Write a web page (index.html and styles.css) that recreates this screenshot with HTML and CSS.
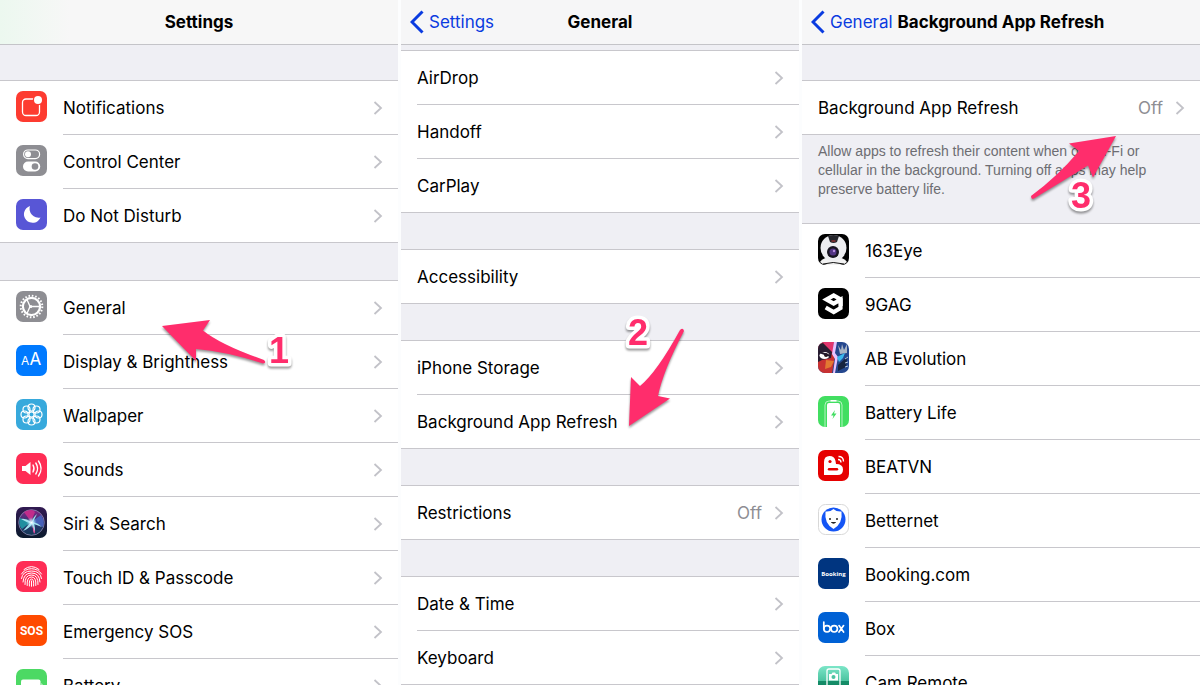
FILE: index.html
```
<!DOCTYPE html>
<html lang="en">
<head>
<meta charset="utf-8">
<meta name="viewport" content="width=device-width,initial-scale=1">
<title>Background App Refresh</title>
<link rel="stylesheet" href="styles.css">
</head>
<body>
<svg class="defs" aria-hidden="true">
  <symbol id="chevron" viewBox="0 0 10 16"><path d="M1.500 2 8 8l-6.500 6" fill="none" stroke="#c2c2c8" stroke-width="1.800"/></symbol>
  <symbol id="back" viewBox="0 0 14 24"><path d="M12.500 1.500 2 12l10.500 10.500" fill="none" stroke="#0a3be0" stroke-width="3"/></symbol>
</svg>

<main class="screens">

  <!-- Settings -->
  <section class="screen">
    <header class="nav nav-green"><h1>Settings</h1></header>

    <nav class="group">
      <a class="row" href="#">
        <svg class="icon" viewBox="0 0 31 31"><rect width="31" height="31" rx="7" fill="#fd3b30"/><rect x="6.500" y="8" width="17" height="16.500" rx="3.500" fill="none" stroke="#fff" stroke-width="1.300"/><circle cx="22" cy="9" r="5.200" fill="#fd3b30"/><circle cx="22" cy="9" r="4" fill="#fff"/></svg>
        <span class="label">Notifications<svg class="chev"><use href="#chevron"/></svg></span>
      </a>
      <a class="row" href="#">
        <svg class="icon" viewBox="0 0 31 31"><rect width="31" height="31" rx="7" fill="#8e8e93"/><rect x="7.600" y="5" width="16" height="8.600" rx="4.300" fill="none" stroke="#fff" stroke-width="1.200"/><circle cx="12" cy="9.300" r="3" fill="#fff"/><rect x="7" y="16.500" width="17.200" height="10" rx="5" fill="#fff"/><circle cx="19" cy="21.500" r="3.300" fill="#8e8e93"/></svg>
        <span class="label">Control Center<svg class="chev"><use href="#chevron"/></svg></span>
      </a>
      <a class="row" href="#">
        <svg class="icon" viewBox="0 0 31 31"><rect width="31" height="31" rx="7" fill="#5856d6"/><path d="M14 7A8.600 8.600 0 1 0 24.500 18.500 9 9 0 0 1 14 7z" fill="#fff"/></svg>
        <span class="label">Do Not Disturb<svg class="chev"><use href="#chevron"/></svg></span>
      </a>
    </nav>

    <nav class="group">
      <a class="row" href="#">
        <svg class="icon" viewBox="0 0 31 31"><rect width="31" height="31" rx="7" fill="#8e8e93"/><g fill="none" stroke="#fff"><circle cx="15.500" cy="15.500" r="10.800" stroke-width="2" stroke-dasharray="1.600 1.793"/><circle cx="15.500" cy="15.500" r="8.600" stroke-width="2.200"/><path d="M14 15.500 11 8.500M14 15.500l-3 7M15 15.500h8" stroke-width="1.300"/></g><circle cx="14.800" cy="15.500" r="1.500" fill="#fff"/></svg>
        <span class="label">General<svg class="chev"><use href="#chevron"/></svg></span>
      </a>
      <a class="row" href="#">
        <svg class="icon" viewBox="0 0 31 31"><rect width="31" height="31" rx="7" fill="#007aff"/><g fill="#fff" font-family="Inter, sans-serif"><text x="5" y="20" font-size="12">A</text><text x="13.500" y="20" font-size="17">A</text></g></svg>
        <span class="label">Display &amp; Brightness<svg class="chev"><use href="#chevron"/></svg></span>
      </a>
      <a class="row" href="#">
        <svg class="icon" viewBox="0 0 31 31"><rect width="31" height="31" rx="7" fill="#37a9dc"/><g fill="none" stroke="#fff" stroke-width="1.200"><circle cx="15.500" cy="15.500" r="2.600"/><circle cx="15.500" cy="8.500" r="3.500"/><circle cx="20.500" cy="10.500" r="3.500"/><circle cx="22.500" cy="15.500" r="3.500"/><circle cx="20.500" cy="20.500" r="3.500"/><circle cx="15.500" cy="22.500" r="3.500"/><circle cx="10.500" cy="20.500" r="3.500"/><circle cx="8.500" cy="15.500" r="3.500"/><circle cx="10.500" cy="10.500" r="3.500"/></g></svg>
        <span class="label">Wallpaper<svg class="chev"><use href="#chevron"/></svg></span>
      </a>
      <a class="row" href="#">
        <svg class="icon" viewBox="0 0 31 31"><rect width="31" height="31" rx="7" fill="#ff2d55"/><path d="M6 13h3.500l5-4v13l-5-4H6z" fill="#fff"/><path d="M17 12q2 3.500 0 7M19.800 10q3.600 5.500 0 11M22.500 8q5.200 7.500 0 15" fill="none" stroke="#fff" stroke-width="1.400" stroke-linecap="round"/></svg>
        <span class="label">Sounds<svg class="chev"><use href="#chevron"/></svg></span>
      </a>
      <a class="row" href="#">
        <svg class="icon" viewBox="0 0 31 31">
          <defs>
            <linearGradient id="siriBg" x2="0" y2="1"><stop stop-color="#321a52"/><stop offset="1" stop-color="#0b1a2d"/></linearGradient>
            <linearGradient id="siriA" x2="0" y2="1"><stop stop-color="#8a2488"/><stop offset=".5" stop-color="#2c3470"/><stop offset="1" stop-color="#123a55"/></linearGradient>
            <radialGradient id="siriGlow"><stop stop-color="#fff"/><stop offset=".5" stop-color="#b9e9ff" stop-opacity=".6"/><stop offset="1" stop-color="#6bc" stop-opacity="0"/></radialGradient>
          </defs>
          <rect width="31" height="31" rx="7" fill="url(#siriBg)"/>
          <circle cx="15.500" cy="15.500" r="12.800" fill="url(#siriA)" stroke="#8f8ab4" stroke-width=".8"/>
          <path d="M15 15 4 11q-2 7 2 11z" fill="#1f8f9f"/>
          <path d="M15 15 8 5q8-4 11 0z" fill="#c12c8b"/>
          <path d="M15 15l10-7q4 6 2 12z" fill="#4760b8"/>
          <path d="M15 15Q10 11 5 12q5 3 9 4L7 24q7-3 9-7l2 9q2-3 0-9l8 3q-4-4-9-5l4-8q-4 3-5 8z" fill="#a5e6ee"/>
          <path d="m16 17 2 10 1-2z" fill="#ff3c9c"/>
          <circle cx="15.500" cy="15.500" r="5.500" fill="url(#siriGlow)"/>
        </svg>
        <span class="label">Siri &amp; Search<svg class="chev"><use href="#chevron"/></svg></span>
      </a>
      <a class="row" href="#">
        <svg class="icon" viewBox="0 0 31 31"><rect width="31" height="31" rx="7" fill="#ff2d55"/><g fill="none" stroke="#fff" stroke-width="1" stroke-linecap="round"><path d="M8 8.500q7.500-6 15 0M5.500 13q3-5 10-5.300 7 .3 10 5.300M5.500 17.500q1-7.500 10-7.500t10 7.500"/><path d="M7 21q.5-9 8.500-9t8.500 9M9 23.500q-.5-9.500 6.500-9.500t6.500 9.500M11.200 24.500q-.7-8.500 4.300-8.500t4.300 8.500M13.400 25q-.6-7 2.100-7t2.100 7M15.500 20v5.300"/></g></svg>
        <span class="label">Touch ID &amp; Passcode<svg class="chev"><use href="#chevron"/></svg></span>
      </a>
      <a class="row" href="#">
        <svg class="icon" viewBox="0 0 31 31"><rect width="31" height="31" rx="7" fill="#ff4a00"/><text x="15.500" y="20" font-family="Roboto, sans-serif" font-weight="700" font-size="12" text-anchor="middle" fill="#fff">SOS</text></svg>
        <span class="label">Emergency SOS<svg class="chev"><use href="#chevron"/></svg></span>
      </a>
      <a class="row" href="#">
        <svg class="icon" viewBox="0 0 31 31"><rect width="31" height="31" rx="7" fill="#4cd964"/><rect x="5" y="10.500" width="19.500" height="11" rx="2" fill="#fff"/><path d="M25.500 14q2 2 0 4z" fill="#fff"/></svg>
        <span class="label">Battery<svg class="chev"><use href="#chevron"/></svg></span>
      </a>
    </nav>

    <svg class="note note-1" viewBox="150 310 150 70">
      <path d="M162 326l48-6-7 10.500q18 14.500 61 29.500 3 3-1 3.500-37-12-67-14.500V361z"/>
      <text x="279" y="363">1</text>
    </svg>
  </section>

  <!-- General -->
  <section class="screen">
    <header class="nav">
      <a class="back" href="#"><svg><use href="#back"/></svg>Settings</a>
      <h1>General</h1>
    </header>

    <div class="scrolled">
      <nav class="group">
        <a class="row" href="#"><span class="label">AirDrop<svg class="chev"><use href="#chevron"/></svg></span></a>
        <a class="row" href="#"><span class="label">Handoff<svg class="chev"><use href="#chevron"/></svg></span></a>
        <a class="row" href="#"><span class="label">CarPlay<svg class="chev"><use href="#chevron"/></svg></span></a>
      </nav>
      <nav class="group">
        <a class="row" href="#"><span class="label">Accessibility<svg class="chev"><use href="#chevron"/></svg></span></a>
      </nav>
      <nav class="group">
        <a class="row" href="#"><span class="label">iPhone Storage<svg class="chev"><use href="#chevron"/></svg></span></a>
        <a class="row" href="#"><span class="label">Background App Refresh<svg class="chev"><use href="#chevron"/></svg></span></a>
      </nav>
      <nav class="group">
        <a class="row" href="#"><span class="label">Restrictions<span class="value">Off</span><svg class="chev"><use href="#chevron"/></svg></span></a>
      </nav>
      <nav class="group">
        <a class="row" href="#"><span class="label">Date &amp; Time<svg class="chev"><use href="#chevron"/></svg></span></a>
        <a class="row" href="#"><span class="label">Keyboard<svg class="chev"><use href="#chevron"/></svg></span></a>
      </nav>
    </div>

    <svg class="note note-2" viewBox="210 310 90 130">
      <path d="M228 426l2-49 9 9q17-14 40-56 3-3 4 1-21 40-26 65l12 2.500z"/>
      <text x="237" y="345">2</text>
    </svg>
  </section>

  <!-- Background App Refresh -->
  <section class="screen">
    <header class="nav">
      <a class="back" href="#"><svg><use href="#back"/></svg>General</a>
      <h1>Background App Refresh</h1>
    </header>

    <nav class="group">
      <a class="row" href="#"><span class="label">Background App Refresh<span class="value">Off</span><svg class="chev"><use href="#chevron"/></svg></span></a>
    </nav>
    <p class="footnote">Allow apps to refresh their content when on Wi-Fi or cellular in the background. Turning off apps may help preserve battery life.</p>

    <div class="group">
      <div class="row">
        <svg class="icon" viewBox="0 0 31 31"><rect width="31" height="31" rx="7" fill="#000"/><path d="M2 28q3-5 13.500-5T29 28q-3 3-7 3H9q-4 0-7-3z" fill="#f2f2f2"/><circle cx="15.500" cy="14" r="13" fill="#ededf0"/><path d="M10 2q5.500-2 11 0l-2 6q-3.500 2-7 0z" fill="#25262c"/><path d="M13.500 7h4" stroke="#a33" stroke-width="1.200"/><circle cx="15" cy="18" r="6" fill="#171420"/><circle cx="15" cy="18" r="3.500" fill="#523483"/><circle cx="16" cy="17" r="1.200" fill="#b58be0"/><path d="M5 30q10-3 21 0" stroke="#111" fill="none"/></svg>
        <span class="label">163Eye</span>
      </div>
      <div class="row">
        <svg class="icon" viewBox="0 0 31 31"><rect width="31" height="31" rx="7" fill="#000"/><path d="M22.800 18v-6.500L15.700 7.500 8.500 11.500l7.200 4 6.800-3.800V20l-6.800 4-8-4.500" fill="none" stroke="#fff" stroke-width="4.200"/></svg>
        <span class="label">9GAG</span>
      </div>
      <div class="row">
        <svg class="icon" viewBox="0 0 31 31">
          <clipPath id="abClip"><rect width="31" height="31" rx="7"/></clipPath>
          <g clip-path="url(#abClip)">
            <path d="M0 0h31v31H0z" fill="#25478e"/><path d="M0 0h14l3 14-3 17H0z" fill="#c83232"/><path d="M4 0h12l-1 11-7-7z" fill="#e1356e"/><path d="M0 3 5 1l9 9-1 6-9 2-4 2z" fill="#281d32"/><ellipse cx="6.500" cy="13.500" rx="5" ry="3.500" fill="#fff"/><circle cx="8" cy="13" r="2" fill="#251519"/><path d="M1 9 13 13l-1 2-11-4z" fill="#20172b"/><path d="m8 18 8 1-3 6-6 2z" fill="#e27932"/><path d="M16 0h3l-2 11 3 4-3 16h-2l2-14-3-5z" fill="#e7c3ff"/><path d="m20 3 3 5 1-6 2 6 3-6v9l-7 1z" fill="#aab5c4"/><path d="m19 15 8-4-2 5-4 4z" fill="#3bb8ed"/><path d="m20 23 9-8-1 10-8 4z" fill="#17243f"/><path d="m27 17 3-2m-3 6 3-1m-3 5 3-1" stroke="#b9c8df"/>
          </g>
        </svg>
        <span class="label">AB Evolution</span>
      </div>
      <div class="row">
        <svg class="icon" viewBox="0 0 31 31"><rect width="31" height="31" rx="7" fill="#42de61"/><path d="M7 31V9q0-4 4-4h9q4 0 4 4v22" fill="none" stroke="#b4f4c0" stroke-width="1"/><path d="M9 31V9q0-2 2-2h9q2 0 2 2v22z" fill="#fff"/><path d="M12.500 4h6v1.500h-6z" fill="#fff"/><path d="m17 14-4 5.500h2.500L14.500 23l4-5.500H16z" fill="#42de61"/></svg>
        <span class="label">Battery Life</span>
      </div>
      <div class="row">
        <svg class="icon" viewBox="0 0 31 31"><rect width="31" height="31" rx="7" fill="#e60000"/><path d="M6 25V12q0-6 5.500-6 5 0 6 5l.5 3q7 0 7 5.500T19.500 25z" fill="#fff"/><path d="M11 19.300h8" stroke="#e60000" stroke-width="2.400" stroke-linecap="round"/><circle cx="12" cy="11.500" r="1.600" fill="#e60000"/><path d="M20 9.500q3 0 3 3M20.500 6.500q5 0 5 5" fill="none" stroke="#fff" stroke-width="1.300"/></svg>
        <span class="label">BEATVN</span>
      </div>
      <div class="row">
        <svg class="icon" viewBox="0 0 31 31"><rect x=".5" y=".5" width="30" height="30" rx="7" fill="#fff" stroke="#d8d8d8"/><circle cx="15.500" cy="15.500" r="12" fill="#1455f5"/><path d="M15.500 5q3 3 8 2.500 1.500 12-8 17.500-9.500-5.500-8-17.500 5 .5 8-2.500z" fill="#fff"/><circle cx="12" cy="15" r="1" fill="#222"/><circle cx="19" cy="15" r="1" fill="#222"/><path d="M13.500 18.500q2 1.500 4 0z" fill="#222" stroke="#222"/></svg>
        <span class="label">Betternet</span>
      </div>
      <div class="row">
        <svg class="icon" viewBox="0 0 31 31"><rect width="31" height="31" rx="7" fill="#003580"/><text x="15.500" y="18" font-family="'Open Sans', sans-serif" font-weight="700" font-size="6" text-anchor="middle" fill="#fff">Booking</text></svg>
        <span class="label">Booking.com</span>
      </div>
      <div class="row">
        <svg class="icon" viewBox="0 0 31 31"><rect width="31" height="31" rx="7" fill="#0061d5"/><g fill="none" stroke="#fff" stroke-width="1.700" stroke-linecap="round"><path d="M5.800 10v7"/><circle cx="9" cy="16.800" r="3.200"/><circle cx="16.200" cy="16.800" r="3.200"/><path d="m21 13.600 4.600 6.400m0-6.400L21 20"/></g></svg>
        <span class="label">Box</span>
      </div>
      <div class="row">
        <svg class="icon" viewBox="0 0 31 31"><defs><linearGradient id="cam" x2="0" y2="1"><stop stop-color="#7ce6c8"/><stop offset=".48" stop-color="#4cc3a0"/><stop offset=".5" stop-color="#158d68"/><stop offset="1" stop-color="#0f7d5b"/></linearGradient></defs><rect width="31" height="31" rx="7" fill="url(#cam)"/><rect x="9" y="3" width="13" height="22" rx="2" fill="none" stroke="#fff" stroke-width="1.300"/><path d="M11 8h2.500l1-1.500h2.500l1 1.500H20v6.500h-9z" fill="#fff"/><circle cx="15.500" cy="11" r="2" fill="#4cc3a0"/></svg>
        <span class="label">Cam Remote</span>
      </div>
    </div>

    <svg class="note note-3" viewBox="220 125 110 95">
      <path d="M314 136l-47 7.500 10 7.500q-22 26-48 45 0 4 3 2.500 28-17 54-33l5 12z"/>
      <text x="279" y="208">3</text>
    </svg>
  </section>

</main>
</body>
</html>
```
FILE: styles.css
```
*{box-sizing:border-box;}
body{margin:0;font-family:Inter,"Liberation Sans",sans-serif;font-size:17px;color:#000;background:#fcfdfe;}
a{color:inherit;text-decoration:none;}
.defs{display:none;}

.screens{display:grid;grid-template-columns:repeat(3,minmax(0,1fr));gap:3px;height:100vh;overflow:hidden;}
.screen{position:relative;background:#efeff4;overflow:hidden;}

/* title bar, back link and title share one cell */
.nav{display:grid;align-items:center;height:45px;background:#f6f6f7;border-bottom:1px solid #c4c4c8;}
.nav h1{grid-area:1/1;margin:0;font-size:17px;font-weight:700;text-align:center;}
.nav-green{background:linear-gradient(90deg,#ecf8ef,#f7f7f7 70px);}
.back{grid-area:1/1;justify-self:start;display:flex;align-items:center;gap:5px;padding-left:9px;color:#0a3be0;z-index:1;}
.back svg{width:14px;height:24px;}

/* lists */
.group{margin-top:37px;background:#fff;border-top:1px solid #c8c7cc;}
.nav + .group{margin-top:35px;}
.scrolled{display:grid;gap:36px;padding-top:5px;}
.scrolled .group{margin-top:0;}
.row{display:flex;align-items:stretch;height:54px;padding-left:16px;}
.icon{width:31px;height:31px;margin:10px 16px 0 0;flex:none;}
.label{flex:1;display:flex;align-items:center;gap:12px;padding-right:15px;border-bottom:1px solid #c8c7cc;}
.row:last-child{border-bottom:1px solid #c8c7cc;}
.row:last-child .label{border-bottom:0;}
.chev{width:10px;height:16px;margin-left:auto;flex:none;}
.value{margin-left:auto;color:#8e8e93;}
.value + .chev{margin-left:0;}
.footnote{margin:0;height:88px;padding:7px 16px 0;font-family:"Liberation Sans",sans-serif;font-size:14px;line-height:19px;color:#6d6d72;}
.footnote + .group{margin-top:0;}

/* arrows with step numbers */
.note{position:absolute;fill:#ff2d6c;filter:drop-shadow(0 2px 1px rgba(0,0,0,.4));}
.note text{font:700 36px "Liberation Sans",sans-serif;text-anchor:middle;stroke:#fff;stroke-width:7px;stroke-linejoin:round;paint-order:stroke;}
.note-1{left:150px;top:310px;width:150px;height:70px;}
.note-2{left:210px;top:310px;width:90px;height:130px;}
.note-3{left:220px;top:125px;width:110px;height:95px;}
```
